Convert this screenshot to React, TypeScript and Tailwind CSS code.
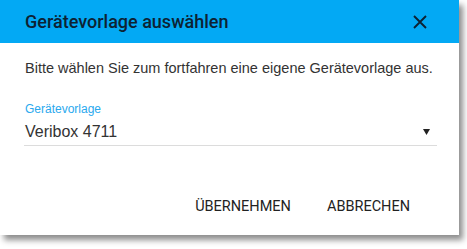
export default function App() {
  return (
    <div className="w-[467px] h-[249px] bg-white">
      <div className="w-[459px] h-[235px] bg-white flex flex-col shadow-[4px_5px_6px_rgba(0,0,0,0.45)]">
        <div className="h-[43px] shrink-0 bg-[#03a9f4] flex items-center justify-between pl-[25px] pr-[32px]">
          <span className="font-['Roboto',sans-serif] font-medium text-[18px] text-[#0d2233]">
            Gerätevorlage auswählen
          </span>
          <svg width="14" height="14" viewBox="0 0 14 14" className="text-[#0d2233]">
            <path d="M1 1L13 13M13 1L1 13" stroke="currentColor" strokeWidth="1.9" />
          </svg>
        </div>
        <div className="flex-1 px-[24px] pt-[15px] font-['Liberation_Sans',Arial,sans-serif]">
          <p className="text-[14.5px] text-[#333] leading-[20px] pl-px">
            Bitte wählen Sie zum fortfahren eine eigene Gerätevorlage aus.
          </p>
          <div className="mt-[24px] w-[413px]">
            <div className="text-[12px] leading-[14px] text-[#2aa9ee] pl-px">Gerätevorlage</div>
            <div className="flex items-center justify-between border-b border-[#dcdcdc] h-[30px] pt-[2px]">
              <span className="text-[16px] text-[#333] pl-px">Veribox 4711</span>
              <svg width="7" height="6" viewBox="0 0 7 6" className="mr-[7px] text-[#222]">
                <path d="M0 0H7L3.5 6Z" fill="currentColor" />
              </svg>
            </div>
          </div>
          <div className="flex justify-end gap-[36px] mt-[51px] pr-[25px] text-[14.5px] leading-[20px] text-[#222] font-['Roboto',sans-serif]">
            <span>ÜBERNEHMEN</span>
            <span>ABBRECHEN</span>
          </div>
        </div>
      </div>
    </div>
  );
}
